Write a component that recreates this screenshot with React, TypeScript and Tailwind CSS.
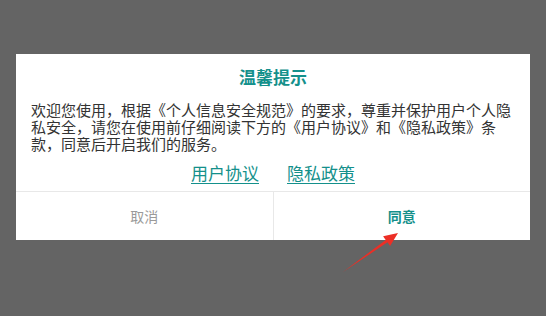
import React from 'react';

function App() {
  return (
    <div
      className="relative w-[546px] h-[316px] overflow-hidden bg-[#646464] px-4 pt-[54px]"
      style={{ fontFamily: '"Noto Sans CJK SC", "Noto Sans", sans-serif' }}
    >
      {/* Dialog */}
      <div className="bg-white flex flex-col">
        <div className="px-[15px] pt-[12px]">
          <h2 className="text-center text-[17px] leading-[22px] font-bold text-[#14908b]">温馨提示</h2>
          <p className="mt-[13px] text-[15px] leading-[17px] text-[#333333]">
            欢迎您使用，根据《个人信息安全规范》的要求，尊重并保护用户个人隐私安全，请您在使用前仔细阅读下方的《用户协议》和《隐私政策》条款，同意后开启我们的服务。
          </p>
          <div className="mt-[10px] pb-[7px] flex justify-center gap-[28px] text-[17px] leading-[22px] text-[#14908b]">
            <span className="underline underline-offset-[3px]">用户协议</span>
            <span className="underline underline-offset-[3px]">隐私政策</span>
          </div>
        </div>
        <div className="flex h-[49px] border-t border-[#e8e8e8]">
          <button className="flex-1 flex items-center justify-center text-[14px] text-[#9a9a9a]">取消</button>
          <button className="flex-1 flex items-center justify-center border-l border-[#e8e8e8] text-[14px] font-bold text-[#14908b]">
            同意
          </button>
        </div>
      </div>

      {/* Annotation arrow */}
      <svg className="absolute left-0 top-0 pointer-events-none" width="546" height="316" viewBox="0 0 546 316">
        <polygon
          points="343,272 385.7,239.9 383.1,236.2 398,233 390.1,246 387.5,242.3"
          fill="#ec2f26"
        />
      </svg>
    </div>
  );
}

export default App;
